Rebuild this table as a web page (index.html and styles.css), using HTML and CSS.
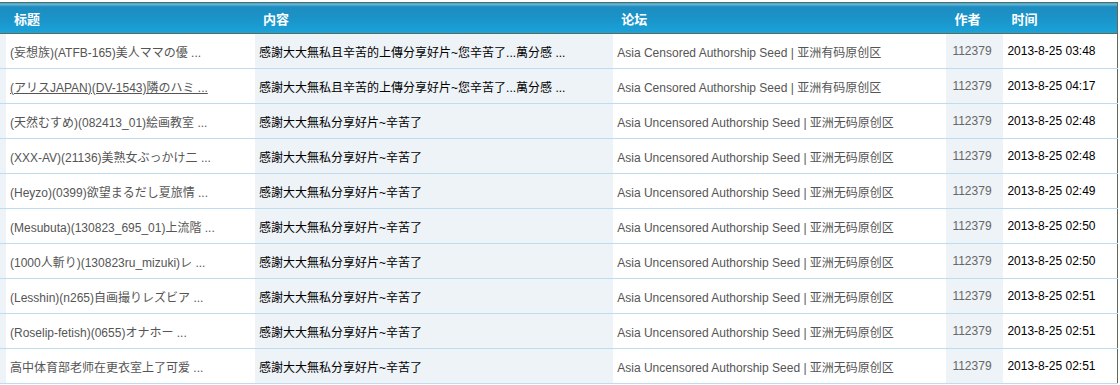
FILE: index.html
```html
<!DOCTYPE html>
<html>
<head>
<meta charset="utf-8">
<link rel="stylesheet" href="styles.css">
</head>
<body>
<div class="wrap">
<table class="list">
<colgroup>
<col class="c0"><col class="c1"><col class="c2"><col class="c3"><col class="c4"><col class="c5">
</colgroup>
<thead>
<tr><th class="alt"></th><th>标题</th><th>内容</th><th>论坛</th><th>作者</th><th>时间</th></tr>
</thead>
<tbody>
<tr><td class="alt"></td><td class="title"><a>(妄想族)(ATFB-165)美人ママの優 ...</a></td><td class="alt content">感謝大大無私且辛苦的上傳分享好片~您辛苦了...萬分感 ...</td><td class="forum">Asia Censored Authorship Seed | 亚洲有码原创区</td><td class="alt author">112379</td><td class="time">2013-8-25 03:48</td></tr>
<tr><td class="alt"></td><td class="title"><a class="hover">(アリスJAPAN)(DV-1543)隣のハミ ...</a></td><td class="alt content">感謝大大無私且辛苦的上傳分享好片~您辛苦了...萬分感 ...</td><td class="forum">Asia Censored Authorship Seed | 亚洲有码原创区</td><td class="alt author">112379</td><td class="time">2013-8-25 04:17</td></tr>
<tr><td class="alt"></td><td class="title"><a>(天然むすめ)(082413_01)絵画教室 ...</a></td><td class="alt content">感謝大大無私分享好片~辛苦了</td><td class="forum">Asia Uncensored Authorship Seed | 亚洲无码原创区</td><td class="alt author">112379</td><td class="time">2013-8-25 02:48</td></tr>
<tr><td class="alt"></td><td class="title"><a>(XXX-AV)(21136)美熟女ぶっかけ二 ...</a></td><td class="alt content">感謝大大無私分享好片~辛苦了</td><td class="forum">Asia Uncensored Authorship Seed | 亚洲无码原创区</td><td class="alt author">112379</td><td class="time">2013-8-25 02:48</td></tr>
<tr><td class="alt"></td><td class="title"><a>(Heyzo)(0399)欲望まるだし夏旅情 ...</a></td><td class="alt content">感謝大大無私分享好片~辛苦了</td><td class="forum">Asia Uncensored Authorship Seed | 亚洲无码原创区</td><td class="alt author">112379</td><td class="time">2013-8-25 02:49</td></tr>
<tr><td class="alt"></td><td class="title"><a>(Mesubuta)(130823_695_01)上流階 ...</a></td><td class="alt content">感謝大大無私分享好片~辛苦了</td><td class="forum">Asia Uncensored Authorship Seed | 亚洲无码原创区</td><td class="alt author">112379</td><td class="time">2013-8-25 02:50</td></tr>
<tr><td class="alt"></td><td class="title"><a>(1000人斬り)(130823ru_mizuki)レ ...</a></td><td class="alt content">感謝大大無私分享好片~辛苦了</td><td class="forum">Asia Uncensored Authorship Seed | 亚洲无码原创区</td><td class="alt author">112379</td><td class="time">2013-8-25 02:50</td></tr>
<tr><td class="alt"></td><td class="title"><a>(Lesshin)(n265)自画撮りレズビア ...</a></td><td class="alt content">感謝大大無私分享好片~辛苦了</td><td class="forum">Asia Uncensored Authorship Seed | 亚洲无码原创区</td><td class="alt author">112379</td><td class="time">2013-8-25 02:51</td></tr>
<tr><td class="alt"></td><td class="title"><a>(Roselip-fetish)(0655)オナホー ...</a></td><td class="alt content">感謝大大無私分享好片~辛苦了</td><td class="forum">Asia Uncensored Authorship Seed | 亚洲无码原创区</td><td class="alt author">112379</td><td class="time">2013-8-25 02:51</td></tr>
<tr><td class="alt"></td><td class="title"><a>高中体育部老师在更衣室上了可爱 ...</a></td><td class="alt content">感謝大大無私分享好片~辛苦了</td><td class="forum">Asia Uncensored Authorship Seed | 亚洲无码原创区</td><td class="alt author">112379</td><td class="time">2013-8-25 02:51</td></tr>
</tbody>
</table>
</div>
</body>
</html>
```
FILE: styles.css
```css
html, body {
  margin: 0;
  padding: 0;
  background: #ffffff;
}
body {
  font-family: "Liberation Sans", Arial, "Noto Sans CJK SC", sans-serif;
  font-size: 12px;
}
.wrap {
  padding-top: 2px;
  width: 1118px;
}
.list {
  border-collapse: collapse;
  table-layout: fixed;
  width: 1118px;
  border-right: 1px solid #5d6b52;
}
.c0 { width: 6px; }
.c1 { width: 249px; }
.c2 { width: 358px; }
.c3 { width: 333px; }
.c4 { width: 57px; }
.c5 { width: 114px; }
thead th {
  height: 30px;
  padding: 0 0 0 8px;
  text-align: left;
  color: #ffffff;
  font-size: 13px;
  font-weight: bold;
  background: linear-gradient(to bottom, #6cb8da 0, #6cb8da 1px, #1d8cbf 3px, #1a94c9 16px, #1aa3da 100%);
  border-top: 1px solid #5d6b52;
  border-bottom: 1px solid #5d6b52;
}
thead th.alt {
  padding: 0;
}
tbody td {
  height: 34px;
  padding: 0 0 0 4px;
  border-bottom: 1px solid #bedcf0;
  white-space: nowrap;
  overflow: hidden;
  color: #000000;
}
tbody td.alt {
  background: #eef3f7;
}
tbody td:first-child {
  padding: 0;
}
.title a {
  color: #555555;
  text-decoration: none;
}
.title a.hover {
  text-decoration: underline;
}
.content {
  color: #000000;
}
.forum {
  color: #555555;
}
.author {
  color: #666666;
  padding-left: 6px;
}
.time {
  color: #000000;
}
```
